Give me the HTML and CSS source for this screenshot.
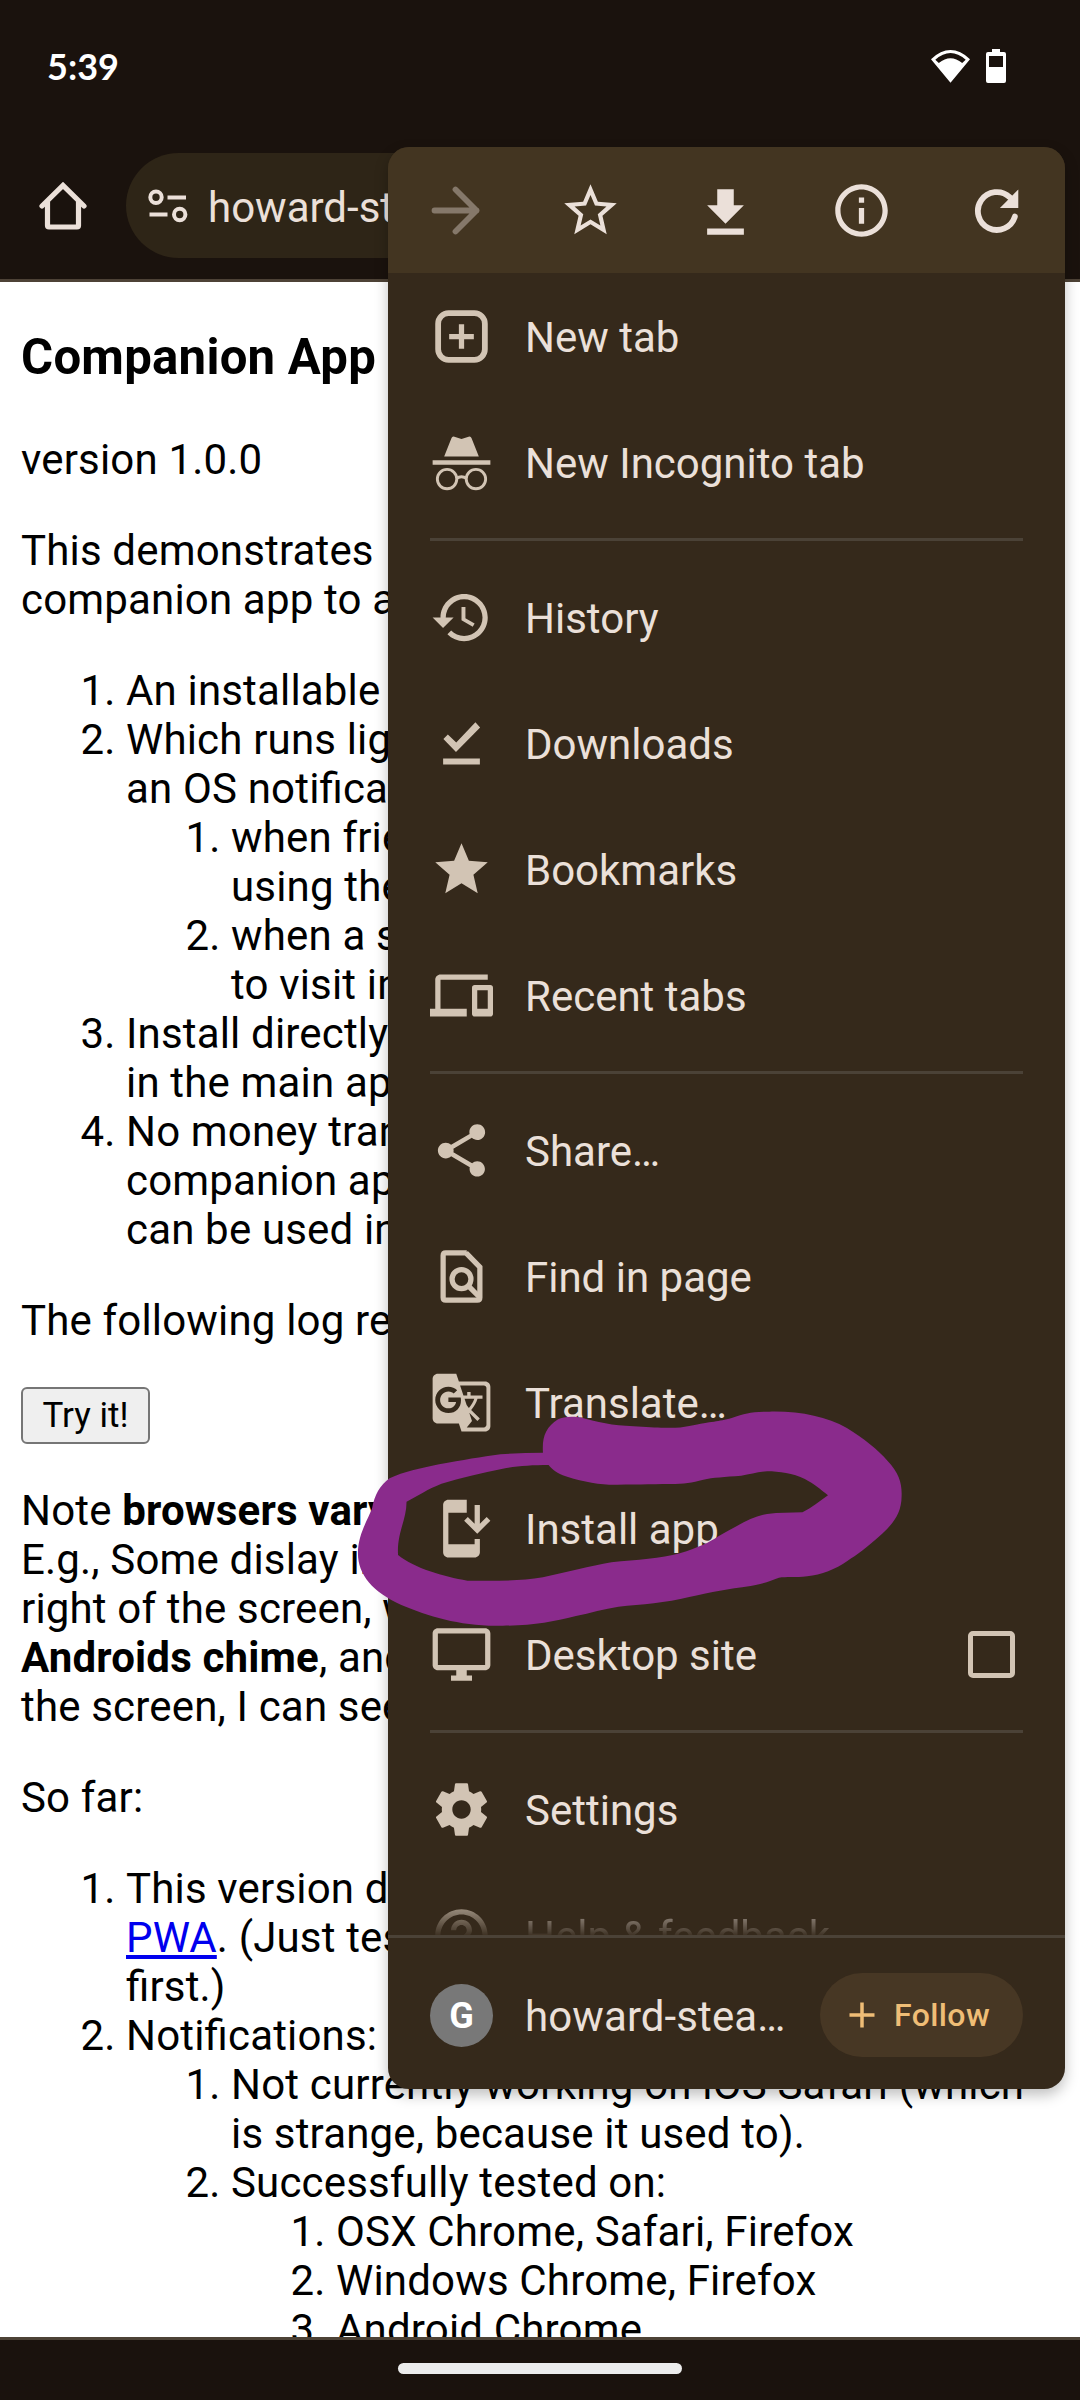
FILE: index.html
```html
<!DOCTYPE html>
<html lang="en">
<head>
<meta charset="utf-8">
<title>Companion App</title>
<link rel="stylesheet" href="styles.css">
</head>
<body>
<header class="status">
  <span class="clock">5:39</span>
  <span class="status-icons">
    <svg class="wifi" viewBox="0 0 39 33"><path fill-rule="evenodd" d="M19.5 32.7 0 9.2Q19.5-9 39 9.2ZM4.3 9.8 7.8 13Q19.5 3.6 31.2 13L34.7 9.8Q19.5-3.6 4.3 9.8Z"/></svg>
    <svg class="battery" viewBox="0 0 20 34"><path fill-rule="evenodd" d="M6 0h8v3h4a2 2 0 0 1 2 2v27a2 2 0 0 1-2 2H2a2 2 0 0 1-2-2V5a2 2 0 0 1 2-2h4ZM3 7v11h14V7Z"/></svg>
  </span>
</header>
<div class="toolbar">
  <svg class="home" viewBox="0 0 48 48"><path d="M3 24 24 3.400 45 24M8.500 19V43.500Q8.500 45 10 45H38Q39.500 45 39.500 43.500V19"/></svg>
  <div class="omnibox">
    <svg class="tune" viewBox="0 0 40 34"><circle cx="8" cy="8.300" r="5.700"/><path d="M19.500 8.500H38M1.500 25.500H19.500"/><circle cx="31.700" cy="25.500" r="5.700"/></svg>
    <span class="url">howard-stearns.github.io</span>
  </div>
</div>
<main class="page">
  <h3>Companion App</h3>
  <p>version 1.0.0</p>
  <p>This demonstrates<br>companion app to a</p>
  <ol>
    <li>An installable</li>
    <li>Which runs lightly<br>an OS notification
      <ol>
        <li>when friends<br>using the</li>
        <li>when a site<br>to visit in</li>
      </ol>
    </li>
    <li>Install directly<br>in the main app</li>
    <li>No money transfer<br>companion app<br>can be used in</li>
  </ol>
  <p>The following log reports</p>
  <button class="try">Try it!</button>
  <p>Note <b>browsers vary</b><br>E.g., Some dislay in<br>right of the screen, with<br><b>Androids chime</b>, and<br>the screen, I can see</p>
  <p>So far:</p>
  <ol>
    <li>This version does<br><a href="#">PWA</a>. (Just test<br>first.)</li>
    <li>Notifications:
      <ol>
        <li>Not currently working on iOS Safari (which<br>is strange, because it used to).</li>
        <li>Successfully tested on:
          <ol>
            <li>OSX Chrome, Safari, Firefox</li>
            <li>Windows Chrome, Firefox</li>
            <li>Android Chrome</li>
          </ol>
        </li>
      </ol>
    </li>
  </ol>
</main>
<footer class="navbar"><span class="handle"></span></footer>

<nav class="menu">
  <div class="actions">
    <svg class="icon disabled" viewBox="0 0 24 24"><path class="line" d="M4 12H20M12 4l8 8-8 8"/></svg>
    <svg class="icon" viewBox="0 0 24 24"><path d="m22 9.240-7.190-.62L12 2 9.190 8.630 2 9.240l5.460 4.730L5.820 21 12 17.270 18.180 21l-1.630-7.030L22 9.240zM12 15.400l-3.760 2.270 1-4.280-3.320-2.880 4.380-.38L12 6.100l1.710 4.040 4.380.38-3.320 2.880 1 4.280L12 15.400z"/></svg>
    <svg class="icon" viewBox="0 0 24 24"><path d="M19 10h-3.850V3.900h-6.300V10H5l7 7zM5 18.900v2.300h14v-2.300z"/></svg>
    <svg class="icon" viewBox="0 0 24 24"><path d="M11 7h2v2h-2zm0 4h2v6h-2zm1-9C6.480 2 2 6.480 2 12s4.480 10 10 10 10-4.480 10-10S17.520 2 12 2zm0 18c-4.410 0-8-3.590-8-8s3.590-8 8-8 8 3.590 8 8-3.590 8-8 8z"/></svg>
    <svg class="icon" viewBox="0 0 24 24"><path class="line" d="M19 14.300A7.200 7.200 0 1 1 17 6.900"/><path d="M20.300 4v7h-7z"/></svg>
  </div>
  <div class="list">
    <div class="item"><svg class="icon" viewBox="0 0 24 24"><rect class="line" x="3.100" y="3.100" width="17.800" height="17.800" rx="4"/><path d="M11 7.300h2V11h3.700v2H13v3.700h-2V13H7.300v-2H11z"/></svg><span>New tab</span></div>
    <div class="item"><svg class="icon" viewBox="0 0 24 24"><path d="M8.200 2.700Q8.500 1.900 9.300 2.200L12 3l2.700-.8Q15.500 1.900 15.800 2.700L18.600 9.700H5.400zM1 11.100h22v1.800H1z"/><g class="thin"><circle cx="6.500" cy="18.300" r="3.700"/><circle cx="17.500" cy="18.300" r="3.700"/><path d="M10 18.100Q12 16.700 14 18.100"/></g></svg><span>New Incognito tab</span></div>
    <hr>
    <div class="item"><svg class="icon" viewBox="0 0 24 24"><path d="M13 3c-4.970 0-9 4.030-9 9H1l3.890 3.890.07.14L9 12H6c0-3.870 3.130-7 7-7s7 3.130 7 7-3.130 7-7 7c-1.930 0-3.680-.79-4.940-2.060l-1.420 1.420C8.270 19.990 10.510 21 13 21c4.970 0 9-4.030 9-9s-4.030-9-9-9zm-1 5v5l4.280 2.540.72-1.210-3.500-2.080V8H12z"/></svg><span>History</span></div>
    <div class="item"><svg class="icon" viewBox="0 0 24 24"><path d="M5.100 10.300 6.800 8.600 10 11.600 17.300 3.900 19.100 5.900 9.900 15.200zM5 17.700h14v2.300H5z"/></svg><span>Downloads</span></div>
    <div class="item"><svg class="icon" viewBox="0 0 24 24"><path d="M12 17.270 18.180 21l-1.640-7.030L22 9.240l-7.190-.61L12 2 9.190 8.630 2 9.240l5.460 4.730L5.820 21z"/></svg><span>Bookmarks</span></div>
    <div class="item"><svg class="icon" viewBox="0 0 24 24"><path d="M4 6h18V4H4c-1.100 0-2 .9-2 2v11H0v3h14v-3H4V6zm19 2h-6c-.55 0-1 .45-1 1v10c0 .55.45 1 1 1h6c.55 0 1-.45 1-1V9c0-.55-.45-1-1-1zm-1 9h-4v-7h4v7z"/></svg><span>Recent tabs</span></div>
    <hr>
    <div class="item"><svg class="icon" viewBox="0 0 24 24"><path d="M18 16.080c-.76 0-1.440.3-1.960.77L8.910 12.700c.05-.23.09-.46.09-.7s-.04-.47-.09-.7l7.050-4.110c.54.5 1.250.81 2.040.81 1.660 0 3-1.340 3-3s-1.340-3-3-3-3 1.340-3 3c0 .24.04.47.09.7L8.040 9.810C7.500 9.310 6.790 9 6 9c-1.660 0-3 1.340-3 3s1.340 3 3 3c.79 0 1.500-.31 2.040-.81l7.120 4.160c-.05.21-.08.43-.08.65 0 1.610 1.310 2.920 2.920 2.920s2.920-1.310 2.920-2.920-1.310-2.920-2.920-2.920z"/></svg><span>Share…</span></div>
    <div class="item"><svg class="icon" viewBox="0 0 24 24"><path class="mid" d="M14 3H6Q5 3 5 4V20Q5 21 6 21H18Q19 21 19 20V8.400L13.700 3"/><circle class="mid" cx="12" cy="13" r="3.600"/><path class="mid" d="M14.600 15.600 19 20"/></svg><span>Find in page</span></div>
    <div class="item"><svg class="icon" viewBox="0 0 24 24"><path d="M21 4H11l-1-3H3c-1.100 0-2 .9-2 2v15c0 1.100.9 2 2 2h8l1 3h9c1.100 0 2-.9 2-2V6c0-1.100-.9-2-2-2zM7 16c-2.760 0-5-2.240-5-5s2.240-5 5-5c1.350 0 2.480.5 3.350 1.300L9.030 8.570c-.38-.36-1.040-.78-2.030-.78-1.740 0-3.150 1.440-3.150 3.210S5.260 14.210 7 14.210c2.010 0 2.840-1.440 2.920-2.410H7v-1.710h4.680c.07.31.12.61.12 1.020C11.800 13.970 9.890 16 7 16zm6.170-5.420h3.700c-.43 1.250-1.110 2.430-2.050 3.470-.31-.35-.6-.72-.86-1.100l-.79-2.370zm8.330 9.920c0 .55-.45 1-1 1H14l2-2.500-1.040-3.100 3.100 3.100.92-.92-3.300-3.250.02-.02c1.130-1.250 1.930-2.690 2.400-4.220H20v-1.300h-4.530V8h-1.290v1.290h-1.440L11.460 5.500h9.040c.55 0 1 .45 1 1v14z"/></svg><span>Translate…</span></div>
    <div class="item"><svg class="icon" viewBox="0 0 24 24"><path d="M17 18H7V6h7V1H7c-1.100 0-2 .9-2 2v18c0 1.100.9 2 2 2h10c1.100 0 2-.9 2-2v-5h-2v2zM18 14l5-5-1.410-1.410L19 10.170V3h-2v7.170l-2.590-2.580L13 9z"/></svg><span>Install app</span></div>
    <div class="item"><svg class="icon" viewBox="0 0 24 24"><path d="M21 2H3c-1.100 0-2 .9-2 2v12c0 1.100.9 2 2 2h7v2H8v2h8v-2h-2v-2h7c1.100 0 2-.9 2-2V4c0-1.100-.9-2-2-2zm0 14H3V4h18v12z"/></svg><span>Desktop site</span><i class="checkbox"></i></div>
    <hr>
    <div class="item"><svg class="icon" viewBox="0 0 24 24"><path d="M19.430 12.980c.04-.32.07-.64.07-.98s-.03-.66-.07-.98l2.110-1.650c.19-.15.24-.42.12-.64l-2-3.460c-.12-.22-.39-.3-.61-.22l-2.490 1c-.52-.4-1.080-.73-1.690-.98l-.38-2.650C14.460 2.180 14.250 2 14 2h-4c-.25 0-.46.18-.49.42l-.38 2.650c-.61.25-1.170.59-1.690.98l-2.490-1c-.23-.09-.49 0-.61.22l-2 3.460c-.13.22-.07.49.12.64l2.110 1.650c-.04.32-.07.65-.07.98s.03.66.07.98l-2.110 1.650c-.19.15-.24.42-.12.64l2 3.460c.12.22.39.3.61.22l2.490-1c.52.4 1.080.73 1.690.98l.38 2.650c.03.24.24.42.49.42h4c.25 0 .46-.18.49-.42l.38-2.650c.61-.25 1.170-.59 1.690-.98l2.490 1c.23.09.49 0 .61-.22l2-3.460c.12-.22.07-.49-.12-.64l-2.110-1.650zM12 15.500c-1.930 0-3.500-1.570-3.500-3.500s1.570-3.500 3.500-3.500 3.500 1.570 3.500 3.500-1.570 3.500-3.500 3.500z"/></svg><span>Settings</span></div>
    <div class="item faded"><svg class="icon" viewBox="0 0 24 24"><path d="M11 18h2v-2h-2v2zm1-16C6.480 2 2 6.480 2 12s4.480 10 10 10 10-4.480 10-10S17.520 2 12 2zm0 18c-4.410 0-8-3.590-8-8s3.590-8 8-8 8 3.590 8 8-3.590 8-8 8zm0-14c-2.210 0-4 1.790-4 4h2c0-1.100.9-2 2-2s2 .9 2 2c0 2-3 1.750-3 5h2c0-2.250 3-2.500 3-5 0-2.210-1.790-4-4-4z"/></svg><span>Help &amp; feedback</span></div>
  </div>
  <div class="site">
    <span class="avatar">G</span>
    <span class="site-name">howard-stea…</span>
    <span class="follow"><svg class="plus" viewBox="0 0 26 26"><path d="M13 .500V25.500M.500 13H25.500"/></svg>Follow</span>
  </div>
</nav>

<svg class="scribble" viewBox="0 0 1568 1200" preserveAspectRatio="none"><path fill-rule="evenodd" d="M430 338C428 290 436 262 462 238C475 228 500 228 520 236C560 252 590 257 640 260C690 264 715 266 740 258C790 243 800 246 830 234C860 220 870 215 910 215C975 213 1030 230 1074 264C1110 295 1140 330 1160 362C1185 400 1191 430 1190 468C1190 520 1172 550 1150 580C1115 625 1095 645 1075 663C1050 688 1020 704 990 709C965 713 945 710 930 713C912 722 900 731 870 738C820 748 790 755 740 771C690 789 640 793 590 800C560 806 530 819 500 828C450 845 410 857 345 857C260 861 190 830 130 795C70 757 38 705 38 640C38 585 57 545 68 505C73 465 85 435 105 415C135 395 170 385 210 373C260 361 300 350 340 343C370 340 400 338 430 338ZM442 375C405 375 375 378 345 386C300 398 260 412 215 431C185 448 165 467 141 485C141 540 120 580 123 645C158 685 220 710 270 722C330 722 380 724 430 712C480 697 530 678 575 667C630 659 680 656 720 640C760 622 785 605 800 590C840 560 870 530 905 522C930 517 955 519 980 517C1000 503 1016 484 1034 466C1018 448 1005 432 985 417C960 400 930 394 905 394C885 396 870 403 850 407C815 411 790 412 770 419C745 428 730 432 700 432C655 433 620 434 570 434C540 433 500 420 472 406C455 395 449 387 442 375Z"/></svg>
</body>
</html>
```
FILE: styles.css
```css
* { box-sizing: border-box; }

body {
  margin: 0;
  width: 1080px;
  height: 2400px;
  position: relative;
  display: flex;
  flex-direction: column;
  overflow: hidden;
  background: #1a120d;
  font: 42px/49px Roboto, sans-serif;
}

.status {
  height: 130px;
  padding: 2px 74px 0 47px;
  display: flex;
  align-items: center;
  justify-content: space-between;
  color: #fff;
}
.clock { font: bold 36px/44px Lato, sans-serif; }
.status-icons { display: flex; align-items: center; gap: 16px; fill: #fff; }
.wifi { width: 39px; height: 33px; }
.battery { width: 20px; height: 34px; }

.toolbar {
  height: 152px;
  padding: 23px 150px 21px 39px;
  display: flex;
  align-items: center;
  gap: 39px;
  border-bottom: 3px solid #4d4236;
}
.home { width: 48px; height: 48px; flex: none; fill: none; stroke: #ebe0d9; stroke-width: 5.2; stroke-linecap: round; }
.omnibox {
  flex: 1;
  height: 105px;
  padding-left: 22px;
  display: flex;
  align-items: center;
  gap: 20px;
  border-radius: 53px;
  background: #2e2517;
  color: #ebe0d9;
}
.tune { width: 40px; height: 34px; fill: none; stroke: #ebe0d9; stroke-width: 4; }
.url { white-space: nowrap; padding-top: 4px; }

.page {
  flex: 1;
  min-height: 0;
  overflow: hidden;
  padding: 47px 21px 0;
  background: #fff;
  color: #000;
  white-space: nowrap;
  letter-spacing: .17px;
  font-feature-settings: "liga" 1;
}
h3 { margin: 0 0 49px; font-size: 49.14px; line-height: 57px; letter-spacing: .25px; }
p { margin: 42px 0; }
ol { margin: 42px 0; padding-left: 105px; }
ol ol { margin: 0; }
a { color: #00e; }
.try {
  display: block;
  width: 129px;
  height: 57px;
  padding: 0;
  border: 2px solid #767676;
  border-radius: 6px;
  background: #efefef;
  color: #000;
  font: 35px/50px Roboto, sans-serif;
}

.navbar {
  height: 63px;
  display: flex;
  align-items: flex-start;
  justify-content: center;
  padding-top: 23px;
  border-top: 3px solid #4d4236;
}
.handle { width: 284px; height: 11px; border-radius: 6px; background: #ececec; }

/* Overflow menu */
.menu {
  position: absolute;
  left: 388px;
  top: 147px;
  width: 677px;
  height: 1942px;
  display: flex;
  flex-direction: column;
  overflow: hidden;
  border-radius: 21px;
  background: #35291b;
  color: #ebe0d9;
  box-shadow: 0 6px 14px rgba(0, 0, 0, .25);
}
.actions {
  height: 126px;
  flex: none;
  padding-right: 1px;
  display: grid;
  grid-template-columns: repeat(5, 1fr);
  place-items: center;
  background: #433521;
}
.icon { width: 63px; height: 63px; flex: none; fill: #d2c4b4; stroke: none; }
.actions .icon { fill: #ebe0d9; }
.line, .mid, .thin { fill: none; stroke: #d2c4b4; }
.line { stroke-width: 2.2; stroke-linecap: round; }
.mid { stroke-width: 2; }
.thin { stroke-width: 1.100; }
.actions .line { stroke: #ebe0d9; }
.actions .disabled .line { stroke: #85786a; stroke-linejoin: round; }

.list { height: 1662px; flex: none; overflow: hidden; }
.item {
  height: 126px;
  padding: 0 42px;
  display: flex;
  align-items: center;
  gap: 32px;
}
.item span { padding-top: 2px; }
.list hr { height: 3px; margin: 13px 42px; border: 0; background: #4b4237; }
.checkbox {
  width: 47px;
  height: 47px;
  margin: 0 8px 0 auto;
  border: 5px solid #d2c4b4;
  border-radius: 5px;
}
.faded { mask-image: linear-gradient(#000 20px, transparent 66px); }

.site {
  flex: 1;
  padding: 3px 42px 0;
  display: flex;
  align-items: center;
  border-top: 3px solid #4b4237;
}
.avatar {
  width: 63px;
  height: 63px;
  border-radius: 50%;
  background: #787878;
  color: #fff;
  font-size: 36px;
  font-weight: 700;
  line-height: 64px;
  text-align: center;
}
.site-name { margin-left: 32px; padding-top: 2px; letter-spacing: .1px; }
.follow {
  width: 203px;
  height: 84px;
  margin-left: auto;
  padding-left: 29px;
  display: flex;
  align-items: center;
  gap: 19px;
  border-radius: 42px;
  background: #473724;
  color: #efbd76;
  font-size: 32px;
  font-weight: 500;
  letter-spacing: .4px;
}
.plus { width: 26px; height: 26px; fill: none; stroke: #efbd76; stroke-width: 3.500; }

/* Freehand highlight over the install entry */
.scribble {
  position: absolute;
  left: 340px;
  top: 1340px;
  width: 740px;
  height: 400px;
  fill: #8a2b8c;
}
```
